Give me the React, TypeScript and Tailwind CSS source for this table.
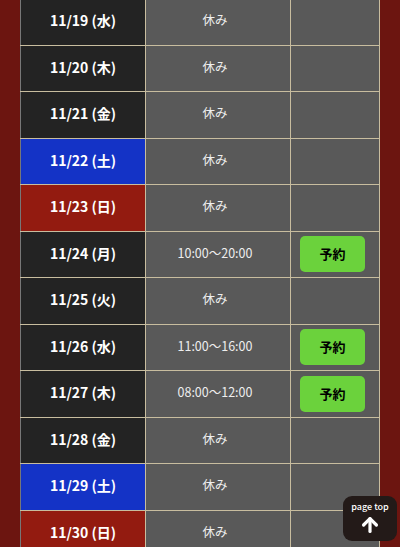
import { ArrowUp } from 'lucide-react'

type Day = {
  date: string
  kind: 'week' | 'sat' | 'sun'
  time?: string
}

const days: Day[] = [
  { date: '11/19 (水)', kind: 'week' },
  { date: '11/20 (木)', kind: 'week' },
  { date: '11/21 (金)', kind: 'week' },
  { date: '11/22 (土)', kind: 'sat' },
  { date: '11/23 (日)', kind: 'sun' },
  { date: '11/24 (月)', kind: 'week', time: '10:00～20:00' },
  { date: '11/25 (火)', kind: 'week' },
  { date: '11/26 (水)', kind: 'week', time: '11:00～16:00' },
  { date: '11/27 (木)', kind: 'week', time: '08:00～12:00' },
  { date: '11/28 (金)', kind: 'week' },
  { date: '11/29 (土)', kind: 'sat' },
  { date: '11/30 (日)', kind: 'sun' },
]

const dateBg: Record<Day['kind'], string> = {
  week: 'bg-[#232323]',
  sat: 'bg-[#1433c6]',
  sun: 'bg-[#931b10]',
}

export default function App() {
  return (
    <div
      className="h-[547px] overflow-hidden bg-[#6c1510] px-5"
      style={{ fontFamily: '"Noto Sans CJK JP", "Noto Sans", sans-serif' }}
    >
      <table className="-mt-[2px] w-[360px] table-fixed border-collapse">
        <colgroup>
          <col className="w-[125px]" />
          <col className="w-[145px]" />
          <col />
        </colgroup>
        <tbody>
          {days.map(d => (
            <tr key={d.date} className="h-[46.5px]">
              <td
                className={`border border-[#c8bd9f] border-l-[#777] pb-[2px] text-center text-[14px] font-bold text-white ${dateBg[d.kind]}`}
              >
                {d.date}
              </td>
              <td className="border border-[#c8bd9f] bg-[#595959] pb-[2px] pr-[6px] text-center text-[12.5px] text-[#eeeeee]">
                {d.time ?? '休み'}
              </td>
              <td className="border border-[#c8bd9f] bg-[#595959] pr-[5px] text-center">
                {d.time && (
                  <button className="mx-auto flex h-[36px] w-[65px] items-center justify-center rounded-[5px] bg-[#6bd23c] pb-[1px] text-[13px] font-bold text-black">
                    予約
                  </button>
                )}
              </td>
            </tr>
          ))}
        </tbody>
      </table>

      <button className="fixed bottom-[6px] right-[3px] flex h-[45px] w-[54px] flex-col items-center justify-center rounded-[9px] bg-[#231a18] text-white">
        <span className="text-[9px] font-medium leading-none">page top</span>
        <ArrowUp className="mt-[3px] h-[22px] w-[22px]" strokeWidth={3.5} />
      </button>
    </div>
  )
}
